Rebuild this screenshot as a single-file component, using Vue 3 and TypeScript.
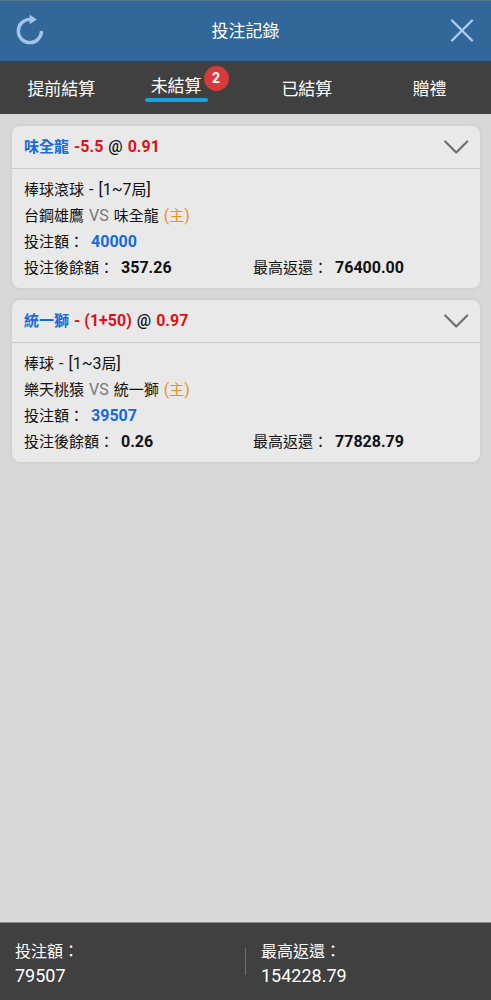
<script setup lang="ts">
import { ref } from 'vue'

interface Bet {
  pick: string
  handicap: string
  odds: string
  game: string
  range: string
  home: string
  away: string
  stake: string
  balance: string
  payout: string
}

const tabs = [
  { label: '提前結算', count: 0 },
  { label: '未結算', count: 2 },
  { label: '已結算', count: 0 },
  { label: '贈禮', count: 0 },
]
const active = ref(1)

const bets: Bet[] = [
  { pick: '味全龍', handicap: '-5.5', odds: '0.91', game: '棒球滾球', range: '1~7', away: '台鋼雄鷹', home: '味全龍', stake: '40000', balance: '357.26', payout: '76400.00' },
  { pick: '統一獅', handicap: '- (1+50)', odds: '0.97', game: '棒球', range: '1~3', away: '樂天桃猿', home: '統一獅', stake: '39507', balance: '0.26', payout: '77828.79' },
]
</script>

<template>
  <div class="page" lang="zh-Hant">
    <header class="bar">
      <button class="icon-btn" type="button" aria-label="重新整理">
        <svg width="32" height="32" viewBox="0 0 32 32" fill="none">
          <path d="M28.5 16A11.6 11.6 0 1 1 16.9 4.4H18.5" stroke="#a3c3ea" stroke-width="3.4" />
          <path d="M16.6 -.4L23.8 4.4L16.6 9.2Z" fill="#a3c3ea" />
        </svg>
      </button>
      <h1 class="title">投注記錄</h1>
      <button class="icon-btn" type="button" aria-label="關閉">
        <svg width="32" height="32" viewBox="0 0 32 32" fill="none">
          <path d="M6 5.5L26 25.5M26 5.5L6 25.5" stroke="#adcaf0" stroke-width="2.4" stroke-linecap="round" />
        </svg>
      </button>
    </header>

    <nav class="tabs">
      <button
        v-for="(tab, i) in tabs"
        :key="tab.label"
        type="button"
        class="tab"
        :class="{ active: active === i, counted: tab.count > 0 }"
        @click="active = i"
      >
        <span class="tab-label">{{ tab.label }}<span v-if="tab.count" class="badge">{{ tab.count }}</span></span>
      </button>
    </nav>

    <main class="list">
      <article v-for="bet in bets" :key="bet.pick" class="card">
        <div class="card-head">
          <h2 class="pick">
            <span class="cjk blue">{{ bet.pick }}</span>
            <span class="red">{{ bet.handicap }}</span>
            <span class="at">@</span>
            <span class="red">{{ bet.odds }}</span>
          </h2>
          <button class="toggle" type="button" aria-label="展開">
            <svg width="26" height="16" viewBox="0 0 26 16" fill="none">
              <path d="M2.2 2.5L13.2 13.5L24.2 2.5" stroke="#707070" stroke-width="2.2" stroke-linecap="round" stroke-linejoin="round" />
            </svg>
          </button>
        </div>
        <div class="card-body">
          <p class="line"><span class="cjk">{{ bet.game }}</span><span>-</span><span>[{{ bet.range }}<span class="cjk">局</span>]</span></p>
          <p class="line"><span class="cjk">{{ bet.away }}</span><span class="vs">VS</span><span class="cjk">{{ bet.home }}</span><span class="orange">(<span class="cjk">主</span>)</span></p>
          <p class="line money"><span class="cjk">投注額：</span><b class="blue">{{ bet.stake }}</b></p>
          <div class="pair">
            <p class="line money"><span class="cjk">投注後餘額：</span><b>{{ bet.balance }}</b></p>
            <p class="line money"><span class="cjk">最高返還：</span><b>{{ bet.payout }}</b></p>
          </div>
        </div>
      </article>
    </main>

    <footer class="totals">
      <div class="total"><span class="total-label">投注額：</span><span class="total-value">79507</span></div>
      <div class="divider"></div>
      <div class="total"><span class="total-label">最高返還：</span><span class="total-value">154228.79</span></div>
    </footer>
  </div>
</template>

<style>
body {
  margin: 0;
  background: #d8d8d8;
}
</style>

<style scoped>
.page {
  display: flex;
  flex-direction: column;
  min-height: 100vh;
  background: #d8d8d8;
  color: #111;
  font-family: Roboto, "Noto Sans CJK TC", sans-serif;
  font-size: 16px;
}
button {
  margin: 0;
  padding: 0;
  border: 0;
  background: none;
  color: inherit;
  font: inherit;
  cursor: pointer;
}
h1, h2, p {
  margin: 0;
}
.bar {
  display: flex;
  align-items: center;
  justify-content: space-between;
  box-sizing: border-box;
  height: 61px;
  padding: 0 13px;
  border-top: 1px solid #56778f;
  background: #32679a;
  color: #fff;
}
.icon-btn {
  display: flex;
}
.icon-btn svg {
  overflow: visible;
}
.title {
  font-size: 17px;
  font-weight: 400;
  line-height: 24px;
}
.tabs {
  display: flex;
  height: 53px;
  background: #404040;
  color: #fff;
  font-size: 17px;
}
.tab {
  flex: 1;
  display: flex;
  align-items: center;
  justify-content: center;
  padding-top: 2px;
}
.tab-label {
  position: relative;
  line-height: 26px;
}
.counted .tab-label {
  margin-right: 16px;
}
.active {
  padding-top: 0;
}
.active .tab-label {
  line-height: 24px;
}
.active .tab-label::after {
  content: "";
  display: block;
  height: 4px;
  margin: 0 -6px;
  border-radius: 2px;
  background: #19a0e3;
}
.badge {
  position: absolute;
  top: -8px;
  right: -27px;
  width: 25px;
  height: 25px;
  border-radius: 50%;
  background: #d8393b;
  font-size: 14px;
  font-weight: 700;
  line-height: 25px;
  text-align: center;
}
.list {
  flex: 1;
  display: flex;
  flex-direction: column;
  gap: 12px;
  padding: 12px 11px 12px 12px;
}
.card {
  border-radius: 8px;
  background: #e9e9e9;
  box-shadow: 0 0 4px rgba(0, 0, 0, 0.08);
}
.card-head {
  display: flex;
  align-items: center;
  justify-content: space-between;
  height: 42px;
  padding: 0 11px 0 12px;
  border-bottom: 1px solid #cacaca;
}
.pick {
  display: flex;
  align-items: baseline;
  gap: 5px;
  font-size: 16px;
  font-weight: 700;
  line-height: 24px;
}
.toggle {
  display: flex;
}
.cjk {
  font-size: 15px;
}
.blue {
  color: #166ae0;
}
.red {
  color: #e01018;
}
.at {
  font-weight: 500;
}
.orange {
  color: #ef8f1c;
}
.vs {
  color: #777;
}
.card-body {
  padding: 8px 12px 7px;
}
.line {
  display: flex;
  align-items: baseline;
  gap: 5px;
  height: 26px;
  line-height: 26px;
  white-space: nowrap;
}
.money {
  gap: 7px;
}
.pair {
  display: grid;
  grid-template-columns: 229px 1fr;
}
.totals {
  display: flex;
  align-items: center;
  box-sizing: border-box;
  height: 78px;
  border-top: 1px solid #898989;
  background: #404040;
  color: #fff;
}
.total {
  flex: 1;
  display: flex;
  flex-direction: column;
  padding: 4px 14px 0 15px;
}
.total-label {
  font-size: 16px;
  line-height: 24px;
}
.total-value {
  font-size: 18px;
  line-height: 24px;
}
.divider {
  width: 1px;
  height: 27px;
  background: #707070;
}
</style>
